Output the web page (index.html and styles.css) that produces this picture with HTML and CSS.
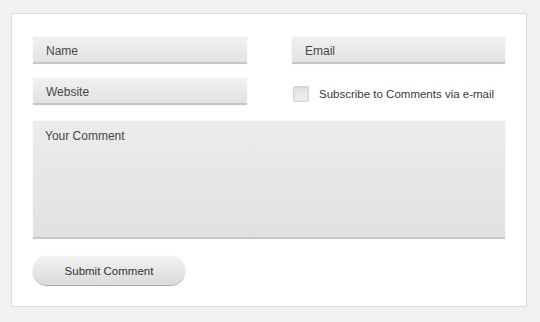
FILE: index.html
```html
<!DOCTYPE html>
<html lang="en">
<head>
    <meta charset="UTF-8">
    <meta name="viewport" content="width=device-width, initial-scale=1.0">
    <title>Comment Form</title>
    <link rel="stylesheet" href="styles.css">
</head>
<body>
    <div class="panel">
        <form class="comment-form">
            <div class="row">
                <input type="text" class="field" placeholder="Name">
                <input type="text" class="field" placeholder="Email">
            </div>
            <div class="row">
                <input type="text" class="field" placeholder="Website">
                <label class="subscribe">
                    <input type="checkbox" class="check">
                    <span class="box"></span>
                    Subscribe to Comments via e-mail
                </label>
            </div>
            <textarea class="field comment" placeholder="Your Comment"></textarea>
            <div class="actions">
                <button type="button" class="submit">Submit Comment</button>
            </div>
        </form>
    </div>
</body>
</html>
```

FILE: styles.css
```css
body{
    margin: 0;
    background: #f1f1f1;
    font-family: "Liberation Sans", Arial, sans-serif;
    font-size: 12px;
    color: #444;
}
.panel{
    width: 514px;
    height: 292px;
    margin: 13px 0 0 11px;
    background: #fff;
    border: 1px solid #dcdcdc;
}
.comment-form{
    padding: 23px 21px 0 21px;
    display: flex;
    flex-direction: column;
}
.row{
    display: grid;
    grid-template-columns: 214px 213px;
    column-gap: 45px;
    align-items: center;
    height: 27px;
    margin-bottom: 14px;
}
.field{
    box-sizing: border-box;
    height: 27px;
    margin: 0;
    padding: 3px 13px 0;
    border: none;
    border-bottom: 2px solid #c6c6c6;
    background: linear-gradient(#f0f0f0, #e3e3e3);
    box-shadow: 0 0 1px rgba(0,0,0,0.12);
    font-family: inherit;
    font-size: 12px;
    color: #444;
    outline: none;
}
.field::placeholder{
    color: #474747;
    opacity: 1;
}
.comment{
    width: 472px;
    height: 118px;
    margin-top: 2px;
    padding: 8px 12px;
    resize: none;
    background: linear-gradient(#ececec, #e1e1e1);
}
.subscribe{
    display: flex;
    align-items: center;
    gap: 10px;
    padding-left: 1px;
    padding-top: 4px;
    white-space: nowrap;
    font-size: 11.5px;
    color: #3a3a3a;
}
.check{
    display: none;
}
.subscribe .box{
    flex: none;
    width: 14px;
    height: 14px;
    border: 1px solid #d2d2d2;
    border-radius: 2px;
    background: linear-gradient(#e4e4e4, #ececec);
    box-shadow: inset 0 1px 2px rgba(0,0,0,0.08);
}
.actions{
    margin-top: 17px;
}
.submit{
    width: 152px;
    height: 29px;
    padding-top: 1px;
    border: none;
    border-radius: 15px;
    background: linear-gradient(#f3f3f3, #dadada);
    box-shadow: 0 1px 1px rgba(0,0,0,0.35), 0 0 1px rgba(0,0,0,0.2);
    font-family: inherit;
    font-size: 11.5px;
    color: #333;
}
```
